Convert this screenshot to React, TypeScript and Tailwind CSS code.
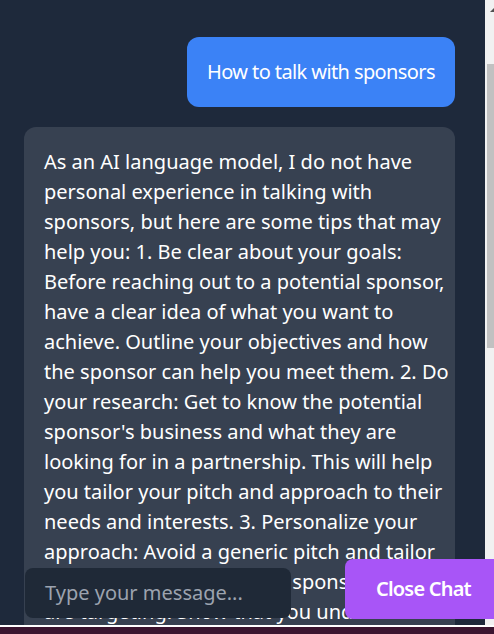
import React from "react";

const lines = [
  "As an AI language model, I do not have",
  "personal experience in talking with",
  "sponsors, but here are some tips that may",
  "help you: 1. Be clear about your goals:",
  "Before reaching out to a potential sponsor,",
  "have a clear idea of what you want to",
  "achieve. Outline your objectives and how",
  "the sponsor can help you meet them. 2. Do",
  "your research: Get to know the potential",
  "sponsor's business and what they are",
  "looking for in a partnership. This will help",
  "you tailor your pitch and approach to their",
  "needs and interests. 3. Personalize your",
  "approach: Avoid a generic pitch and tailor",
  "your pitch to every target: sponsors you",
  "are targeting. Show that you understand",
  "their brand, values and audience.",
];

export default function App() {
  return (
    <div
      className="w-[494px] h-[634px] overflow-hidden flex flex-col"
      style={{ fontFamily: '"Noto Sans", "Open Sans", sans-serif' }}
    >
      <div className="relative flex h-[625px]">
        <div className="w-[485px] h-full bg-[#1e293b] overflow-hidden flex flex-col gap-5 pt-[38px] pl-6 pr-[30px]">
          <div className="self-end bg-[#3b82f6] text-white rounded-xl px-5 py-5 text-[20px] leading-[30px] whitespace-nowrap tracking-[-0.6px] -mt-px">
            How to talk with sponsors
          </div>
          <div className="bg-[#374151] text-white rounded-xl p-5 text-[20px] leading-[30px]">
            {lines.map((l, i) => (
              <div key={i} className="whitespace-nowrap">
                {l}
              </div>
            ))}
          </div>
        </div>
        <div className="relative w-[9px] h-full bg-[#f1f1f1]">
          <div className="absolute left-[5px] top-[8px] w-0 h-0 border-l-[4px] border-r-[4px] border-b-[4px] border-l-transparent border-r-transparent border-b-[#505050]" />
          <div className="absolute left-[2px] top-[64px] w-[7px] h-[284px] bg-[#c1c1c1]" />
        </div>
        <div className="absolute left-[25px] top-[568px] w-[266px] h-[50px] bg-[#1f2937] rounded-lg flex items-center px-5 text-[20px] text-[#9ca3af]">
          Type your message...
        </div>
        <div className="absolute left-[345px] top-[559px] w-[156px] h-[60px] bg-[#a855f7] rounded-lg flex items-center pl-[31px] text-[20px] font-semibold text-white whitespace-nowrap tracking-[-0.8px]">
          Close Chat
        </div>
      </div>
      <div className="h-[2px] bg-white" />
      <div className="flex-1 bg-[#3b1530]" />
    </div>
  );
}
